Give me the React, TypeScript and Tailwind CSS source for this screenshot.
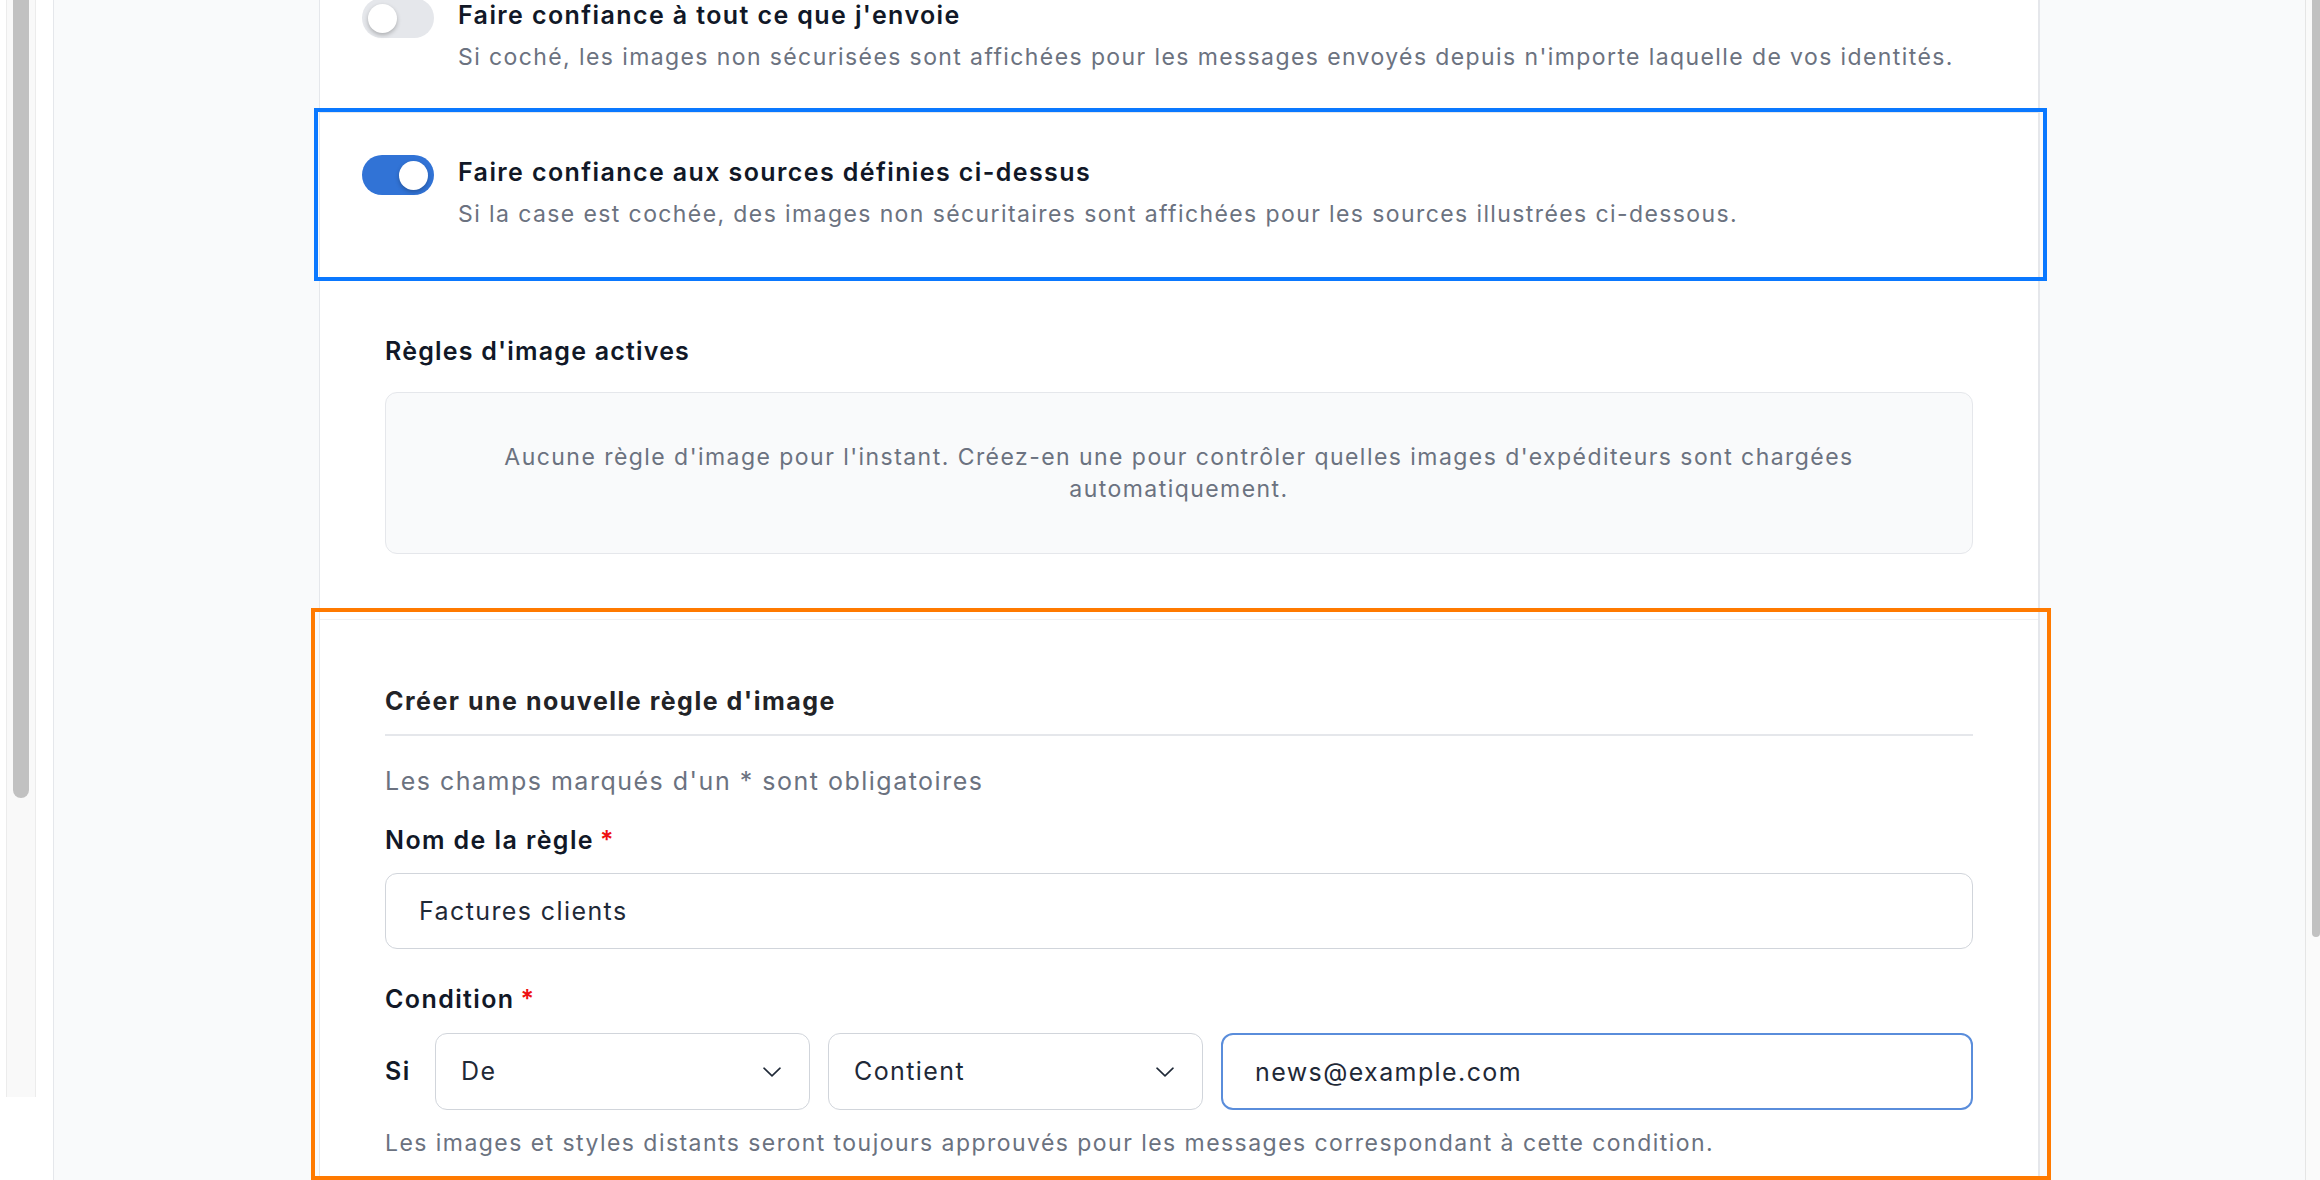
import React, { useState } from 'react';

interface ToggleRowProps {
  on: boolean;
  title: string;
  hint: string;
  className?: string;
  children?: React.ReactNode;
}

const Switch: React.FC<{ on: boolean; onClick: () => void }> = ({ on, onClick }) => (
  <button
    type="button"
    onClick={onClick}
    className={`relative mt-[1px] flex h-[40px] w-[72px] shrink-0 items-center rounded-full px-[6px] transition-colors ${
      on ? 'justify-end bg-[#3173d6]' : 'justify-start bg-[#e5e7eb]'
    }`}
  >
    <span className="block h-[29px] w-[29px] rounded-full bg-white shadow-[0_2px_4px_rgba(0,0,0,0.25)]" />
  </button>
);

const ToggleRow: React.FC<ToggleRowProps> = ({ on, title, hint, className, children }) => {
  const [checked, setChecked] = useState(on);
  return (
    <div className={`relative flex items-start gap-[24px] px-[42px] pt-[41px] pb-[40px] ${className ?? ''}`}>
      <Switch on={checked} onClick={() => setChecked(!checked)} />
      <div>
        <p className="text-[25px] leading-[36px] font-semibold tracking-[1.4px] text-[#111827]">{title}</p>
        <p className="mt-[9px] text-[23px] leading-[30px] tracking-[1.4px] text-[#6b7280]">{hint}</p>
      </div>
      {children}
    </div>
  );
};

const Chevron = () => (
  <svg width="18" height="10" viewBox="0 0 18 10" fill="none" className="shrink-0">
    <path d="M1 1.2 9 8.8 17 1.2" stroke="#1f2937" strokeWidth="1.6" strokeLinecap="round" strokeLinejoin="round" />
  </svg>
);

const SelectBox: React.FC<{ value: string }> = ({ value }) => (
  <div className="flex h-[77px] w-[375px] shrink-0 items-center justify-between rounded-[12px] border-[1.5px] border-[#d1d5db] bg-white pl-[25px] pr-[28px] text-[25px] tracking-[1.4px] text-[#1f2937]">
    <span>{value}</span>
    <Chevron />
  </div>
);

const Required = () => <span className="ml-[6px] text-[#ee1111]">*</span>;

export default function App() {
  const [ruleName, setRuleName] = useState('Factures clients');
  const [pattern, setPattern] = useState('news@example.com');

  return (
    <div className="flex h-[1180px] w-[2320px] overflow-hidden bg-white font-['Inter',sans-serif]">
      {/* inner scroll strip */}
      <div className="w-[53px] shrink-0 pl-[6px]">
        <div className="flex h-[1097px] w-[30px] justify-center border-x-[1.5px] border-[#ececec] bg-[#f9f9f9]">
          <div className="h-[798px] w-[16px] rounded-b-full bg-[#c1c1c1]" />
        </div>
      </div>

      {/* settings navigation column */}
      <div className="w-[267px] shrink-0 border-x-[1.5px] border-[#e5e7eb] bg-[#f9fafb]" />

      {/* settings content */}
      <div className="w-[1720px] shrink-0 border-r-[2px] border-[#e5e7eb] bg-white">
        <div className="-mt-[44px]">
          <ToggleRow
            on={false}
            title="Faire confiance à tout ce que j'envoie"
            hint="Si coché, les images non sécurisées sont affichées pour les messages envoyés depuis n'importe laquelle de vos identités."
          />
          <ToggleRow
            on={true}
            className="border-t-[1.5px] border-[#e5e7eb]"
            title="Faire confiance aux sources définies ci-dessus"
            hint="Si la case est cochée, des images non sécuritaires sont affichées pour les sources illustrées ci-dessous."
          >
            <div className="pointer-events-none absolute -top-[5px] -bottom-[12px] -left-[6px] -right-[9px] border-[4px] border-[#0a78ff]" />
          </ToggleRow>

          {/* active rules */}
          <div className="px-[65px] pt-[64px]">
            <h3 className="text-[25px] leading-[36px] font-semibold tracking-[1.2px] text-[#111827]">Règles d'image actives</h3>
            <div className="mt-[23px] rounded-[12px] border-[1.5px] border-[#e5e7eb] bg-[#f9fafb] px-[48px] py-[48px] text-center text-[23px] leading-[32px] tracking-[1.45px] text-[#6b7280]">
              Aucune règle d'image pour l'instant. Créez-en une pour contrôler quelles images d'expéditeurs sont chargées automatiquement.
            </div>
          </div>

          {/* new rule form */}
          <div className="relative mt-[65px] border-t-[1.5px] border-[#f0f1f3] px-[65px] pt-[63px] pb-[12px]">
            <div className="pointer-events-none absolute -top-[12px] -bottom-[10px] -left-[9px] -right-[13px] border-[4px] border-[#ff7a00]" />
            <h3 className="border-b-[2px] border-[#e5e7eb] pb-[15px] text-[25px] leading-[36px] font-bold tracking-[1.5px] text-[#222327]">
              Créer une nouvelle règle d'image
            </h3>
            <p className="mt-[27px] text-[25px] leading-[36px] tracking-[1.5px] text-[#6b7280]">Les champs marqués d'un * sont obligatoires</p>

            <label className="mt-[23px] block text-[25px] leading-[36px] font-semibold tracking-[1.4px] text-[#111827]">
              Nom de la règle
              <Required />
            </label>
            <input
              value={ruleName}
              onChange={(e) => setRuleName(e.target.value)}
              className="mt-[15px] block h-[76px] w-full rounded-[12px] border-[1.5px] border-[#d1d5db] bg-white px-[33px] text-[25px] tracking-[1.4px] text-[#1f2937] outline-none"
            />

            <label className="mt-[32px] block text-[25px] leading-[36px] font-semibold tracking-[1.4px] text-[#111827]">
              Condition
              <Required />
            </label>
            <div className="mt-[16px] flex items-center gap-[18px]">
              <span className="w-[32px] text-[25px] font-semibold tracking-[1.4px] text-[#111827]">Si</span>
              <SelectBox value="De" />
              <SelectBox value="Contient" />
              <input
                value={pattern}
                onChange={(e) => setPattern(e.target.value)}
                className="h-[77px] min-w-0 flex-1 rounded-[12px] border-[2px] border-[#5a8ddb] bg-white px-[32px] text-[25px] tracking-[1.4px] text-[#1f2937] outline-none"
              />
            </div>
            <p className="mt-[18px] text-[23px] leading-[30px] tracking-[1.45px] text-[#6b7280]">
              Les images et styles distants seront toujours approuvés pour les messages correspondant à cette condition.
            </p>
          </div>
        </div>
      </div>

      {/* right gutter */}
      <div className="flex-1 bg-[#f9fafb]" />

      {/* page scrollbar */}
      <div className="flex w-[15px] shrink-0 justify-end border-l-[1.5px] border-[#e5e5e5] bg-[#fafafa]">
        <div className="h-[937px] w-[8px] rounded-b-full bg-[#c1c1c1]" />
      </div>
    </div>
  );
}
